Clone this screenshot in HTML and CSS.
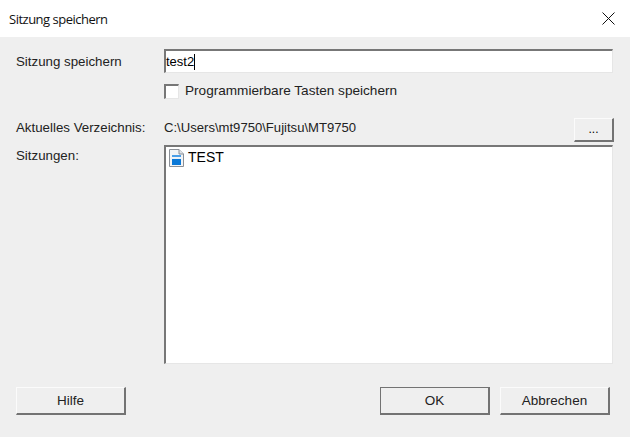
FILE: index.html
```html
<!DOCTYPE html>
<html lang="de">
<head>
<meta charset="utf-8">
<title>Sitzung speichern</title>
<link rel="stylesheet" href="styles.css">
</head>
<body>
<div class="dialog">
  <header class="titlebar">
    <span class="title">Sitzung speichern</span>
    <svg class="close" width="13" height="13" viewBox="0 0 13 13"><path d="M0.5 0.5L12.5 12.5M12.5 0.5L0.5 12.5" stroke="#111" stroke-width="1" fill="none"/></svg>
  </header>
  <main class="content">
    <div class="row row-name">
      <label class="label">Sitzung speichern</label>
      <div class="field sunken input-box"><span class="input-text">test2</span><span class="caret"></span></div>
    </div>
    <div class="row row-check">
      <span class="label"></span>
      <div class="check-wrap"><span class="checkbox sunken"></span><span class="check-label">Programmierbare Tasten speichern</span></div>
    </div>
    <div class="row row-dir">
      <span class="label label-dir">Aktuelles Verzeichnis:</span>
      <span class="path">C:\Users\mt9750\Fujitsu\MT9750</span>
      <button class="btn btn-small">...</button>
    </div>
    <div class="row row-list">
      <span class="label label-top">Sitzungen:</span>
      <div class="field sunken list">
        <div class="item">
          <svg class="item-icon" width="15" height="18" viewBox="0 0 15 18">
            <path d="M0.5 0.5H10L14.5 5V17.5H0.5Z" fill="#f2f4f6" stroke="#8a8f96"/>
            <path d="M10 0.5V5H14.5" fill="#dfe3e8" stroke="#8a8f96"/>
            <rect x="3" y="6" width="9" height="2" fill="#4b9fe8"/>
            <rect x="3" y="9" width="9" height="1" fill="#e8f2fb"/>
            <rect x="3" y="10" width="9" height="6" fill="#0a78d7"/>
          </svg>
          <span class="item-text">TEST</span>
        </div>
      </div>
    </div>
    <div class="actions">
      <button class="btn btn-main">Hilfe</button>
      <div class="actions-right">
        <button class="btn btn-main btn-default">OK</button>
        <button class="btn btn-main">Abbrechen</button>
      </div>
    </div>
  </main>
</div>
</body>
</html>
```
FILE: styles.css
```css
* { box-sizing: border-box; }
html, body { margin: 0; padding: 0; }
body { width: 630px; height: 437px; overflow: hidden; background: #efefef; font-family: "Liberation Sans", Arial, sans-serif; font-size: 13.3px; color: #000; }
.dialog { width: 630px; height: 437px; display: flex; flex-direction: column; }
.titlebar { height: 37px; background: #fff; display: flex; align-items: center; justify-content: space-between; padding: 0 15px 0 9px; }
.title { font-family: "Open Sans", "Noto Sans", sans-serif; font-size: 13px; letter-spacing: -0.5px; color: #111; }
.close { display: block; margin-top: -1px; }
.content { flex: 1; padding: 12px 16px 0 16px; display: flex; flex-direction: column; }
.row { display: flex; }
.label { width: 148px; flex: none; color: #222; }
.label-dir { padding-bottom: 5px; }
.row-name { height: 24px; align-items: center; }
.sunken { border-style: solid; border-width: 2px 1px 1px 2px; border-color: #777 #e6e6e6 #e6e6e6 #777; background: #fff; }
.field { width: 449px; }
.input-box { height: 24px; display: flex; align-items: center; padding-left: 0; font-size: 13px; }
.caret { width: 1px; height: 16px; background: #000; }
.row-check { margin-top: 10px; height: 16px; align-items: center; }
.check-wrap { display: flex; align-items: center; gap: 6px; }
.checkbox { width: 15px; height: 15px; display: block; }
.check-label { font-size: 13.6px; color: #222; padding-bottom: 2px; }
.row-dir { margin-top: 18px; height: 25px; align-items: center; }
.path { width: 410px; flex: none; color: #222; font-size: 13.1px; padding-bottom: 5px; }
.btn { font-family: inherit; font-size: 12px; color: #000; background: #efefef; border-style: solid; border-width: 1px 2px 2px 1px; border-color: #fbfbfb #737373 #737373 #fbfbfb; padding: 0; border-radius: 0; }
.btn-small { width: 40px; height: 24px; }
.row-list { margin-top: 3px; height: 219px; }
.label-top { padding-top: 3px; }
.list { height: 219px; padding: 1px 3px; }
.item { display: flex; align-items: center; gap: 4px; height: 20px; }
.item-icon { display: block; }
.item-text { font-size: 14px; padding-bottom: 2px; }
.actions { margin-top: 23px; display: flex; justify-content: space-between; padding-right: 4px; }
.actions-right { display: flex; gap: 10px; }
.btn-main { width: 110px; height: 28px; font-size: 13.5px; font-weight: 400; color: #222; }
.btn-default { border-color: #737373; border-width: 1px 2px 2px 1px; }
```
